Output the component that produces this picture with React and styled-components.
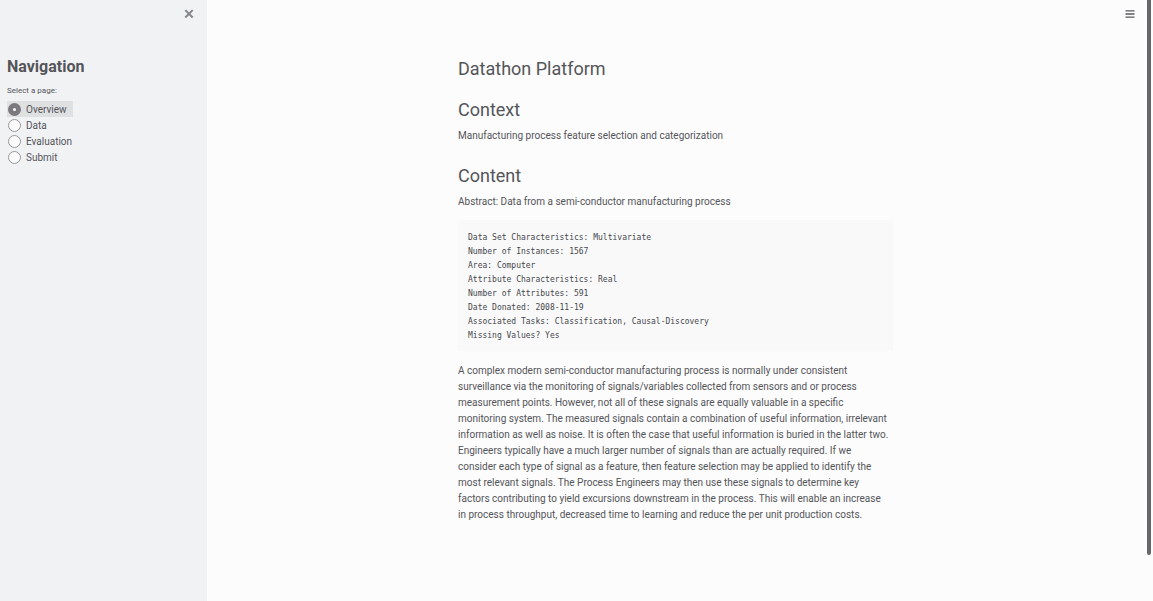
import React, { useState } from "react";
import styled, { createGlobalStyle } from "styled-components";

const GlobalStyle = createGlobalStyle`
  * { box-sizing: border-box; }
  body {
    margin: 0;
    background: #fcfcfc;
    color: #54555a;
    font-family: Roboto, "Noto Sans", "Liberation Sans", sans-serif;
    font-size: 10px;
    line-height: 16px;
  }
`;

const Page = styled.div`
  display: flex;
  min-height: 100vh;
`;

const Sidebar = styled.aside`
  flex: 0 0 207px;
  padding: 6px 7px;
  background: #f1f2f4;
`;

const SidebarTop = styled.div`
  display: flex;
  justify-content: flex-end;
  padding-right: 6px;
  margin-bottom: 35px;
`;

const IconButton = styled.button`
  display: flex;
  align-items: center;
  justify-content: center;
  width: 10px;
  height: 16px;
  padding: 0;
  border: 0;
  background: none;
  color: ${(p) => p.$color};
  cursor: pointer;
`;

const SidebarTitle = styled.h2`
  margin: 0 0 6px;
  font-size: 16px;
  line-height: 20px;
  font-weight: 700;
`;

const RadioGroup = styled.fieldset`
  display: flex;
  flex-direction: column;
  align-items: flex-start;
  margin: 0;
  padding: 0;
  border: 0;
`;

const Legend = styled.legend`
  padding: 0;
  margin-bottom: 2px;
  font-size: 8px;
`;

const Option = styled.label`
  display: flex;
  align-items: center;
  gap: 5px;
  height: 16px;
  padding: 0 5px 0 1px;
  background: ${(p) => (p.$checked ? "#dfe0e2" : "none")};
  cursor: pointer;

  &:first-of-type {
    padding-right: 6px;
  }
`;

const Radio = styled.input`
  appearance: none;
  width: 13px;
  height: 13px;
  margin: 0;
  border: 1px solid #98989c;
  border-radius: 50%;
  background: #fcfcfc;

  &:checked {
    border: 5px solid #7b797e;
  }
`;

const OptionText = styled.span`
  padding-top: 1px;
`;

const Main = styled.main`
  flex: 1;
  display: flex;
  flex-direction: column;
  align-items: center;
  padding: 6px 0 78px;
`;

const Toolbar = styled.header`
  display: flex;
  justify-content: flex-end;
  width: 100%;
  padding-right: 9px;
  margin-bottom: 34px;
`;

const Article = styled.article`
  width: 100%;
  max-width: 435px;
`;

const Heading = styled.h1`
  margin: 0 0 ${(p) => p.$gap}px;
  font-size: 18px;
  line-height: 26px;
  font-weight: 400;
`;

const Text = styled.p`
  margin: 0 0 ${(p) => p.$gap}px;
  white-space: nowrap;
`;

const Code = styled.pre`
  margin: 0 0 12px;
  padding: 11px 10px 8px;
  background: #f9f9fa;
  color: #45474c;
  font-family: "DejaVu Sans Mono", "Liberation Mono", monospace;
  font-size: 8px;
  line-height: 14px;
`;

const ScrollTrack = styled.div`
  flex: 0 0 9px;
  display: flex;
  justify-content: center;
`;

const ScrollThumb = styled.div`
  width: 4px;
  height: 555px;
  border-radius: 0 0 2px 2px;
  background: #66666a;
`;

const pages = ["Overview", "Data", "Evaluation", "Submit"];

const dataset = `Data Set Characteristics: Multivariate
Number of Instances: 1567
Area: Computer
Attribute Characteristics: Real
Number of Attributes: 591
Date Donated: 2008-11-19
Associated Tasks: Classification, Causal-Discovery
Missing Values? Yes`;

const description = [
  "A complex modern semi-conductor manufacturing process is normally under consistent",
  "surveillance via the monitoring of signals/variables collected from sensors and or process",
  "measurement points. However, not all of these signals are equally valuable in a specific",
  "monitoring system. The measured signals contain a combination of useful information, irrelevant",
  "information as well as noise. It is often the case that useful information is buried in the latter two.",
  "Engineers typically have a much larger number of signals than are actually required. If we",
  "consider each type of signal as a feature, then feature selection may be applied to identify the",
  "most relevant signals. The Process Engineers may then use these signals to determine key",
  "factors contributing to yield excursions downstream in the process. This will enable an increase",
  "in process throughput, decreased time to learning and reduce the per unit production costs.",
];

export default function App() {
  const [page, setPage] = useState("Overview");
  return (
    <Page>
      <GlobalStyle />
      <Sidebar>
        <SidebarTop>
          <IconButton type="button" aria-label="Close sidebar" $color="#858589">
            <svg width="10" height="10" viewBox="0 0 10 10" stroke="currentColor" strokeWidth="2">
              <path d="M1.3 1.1 8.7 8.5M8.7 1.1 1.3 8.5" />
            </svg>
          </IconButton>
        </SidebarTop>
        <SidebarTitle>Navigation</SidebarTitle>
        <RadioGroup>
          <Legend>Select a page:</Legend>
          {pages.map((name) => (
            <Option key={name} $checked={page === name}>
              <Radio type="radio" name="page" checked={page === name} onChange={() => setPage(name)} />
              <OptionText>{name}</OptionText>
            </Option>
          ))}
        </RadioGroup>
      </Sidebar>
      <Main>
        <Toolbar>
          <IconButton type="button" aria-label="Menu" $color="#5a5a5e">
            <svg width="10" height="10" viewBox="0 0 10 10" stroke="currentColor" strokeWidth="1.3">
              <path d="M.5 1.8h9M.5 5h9M.5 8.2h9" />
            </svg>
          </IconButton>
        </Toolbar>
        <Article>
          <Heading $gap={15}>Datathon Platform</Heading>
          <Heading as="h2" $gap={5}>Context</Heading>
          <Text $gap={19}>Manufacturing process feature selection and categorization</Text>
          <Heading as="h2" $gap={5}>Content</Heading>
          <Text $gap={10}>Abstract: Data from a semi-conductor manufacturing process</Text>
          <Code>{dataset}</Code>
          <Text $gap={0}>
            {description.map((line) => (
              <React.Fragment key={line}>
                {line}
                <br />
              </React.Fragment>
            ))}
          </Text>
        </Article>
      </Main>
      <ScrollTrack>
        <ScrollThumb />
      </ScrollTrack>
    </Page>
  );
}
